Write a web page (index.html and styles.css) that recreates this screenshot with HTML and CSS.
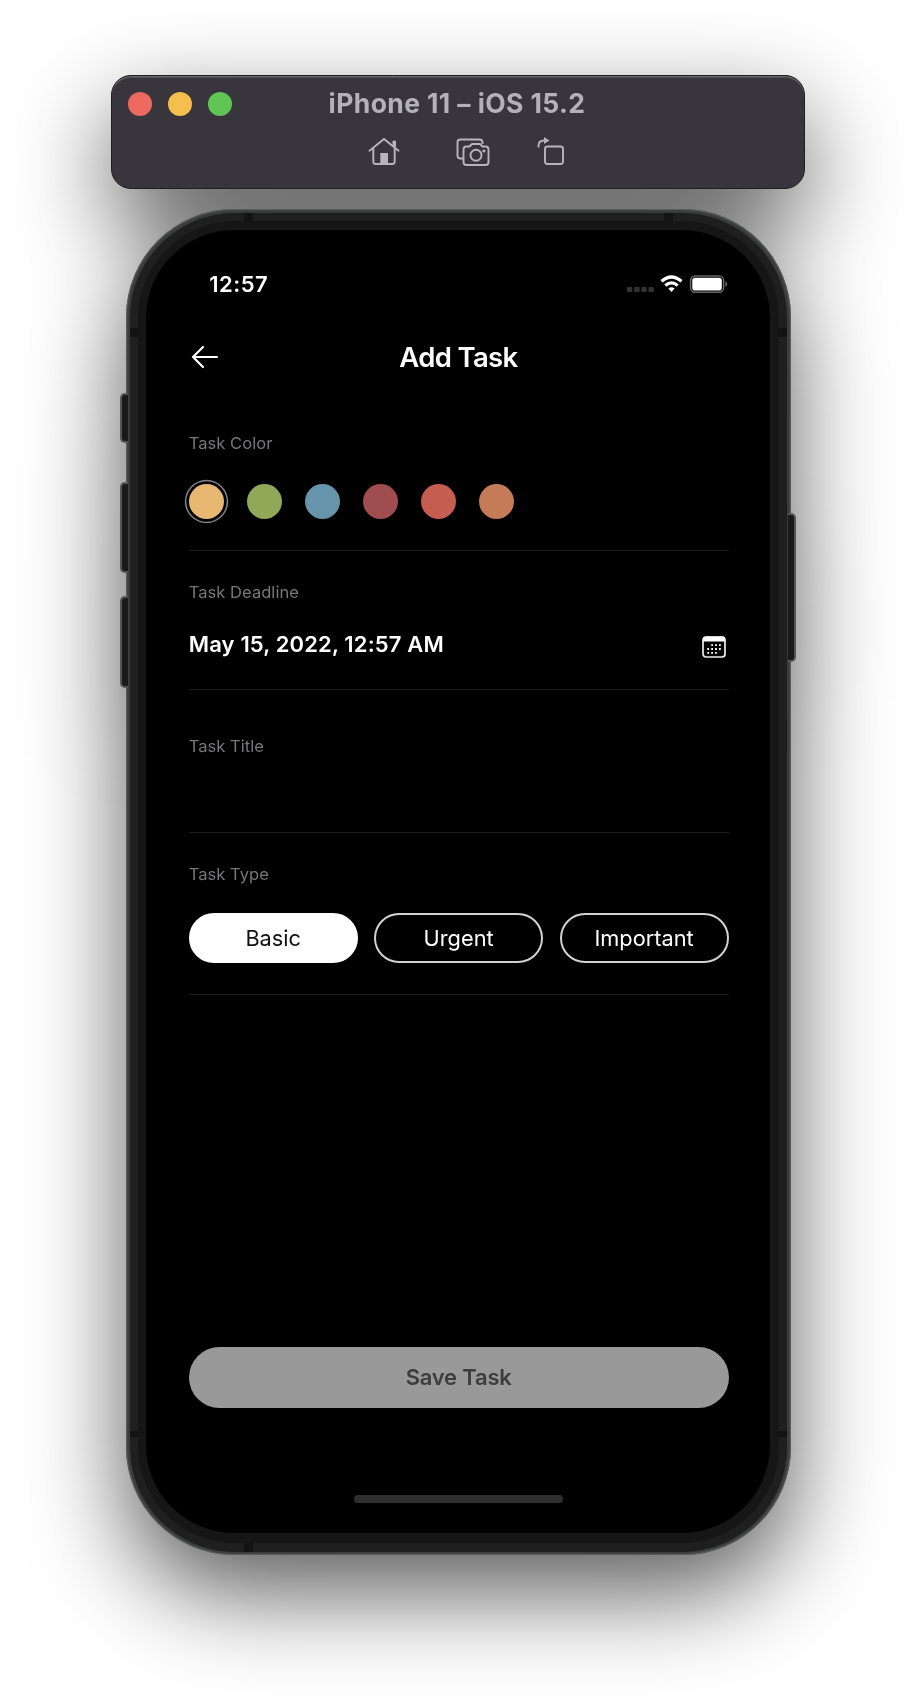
FILE: index.html
```html
<!DOCTYPE html>
<html lang="en">
<head>
<meta charset="utf-8">
<title>Add Task</title>
<link rel="stylesheet" href="styles.css">
</head>
<body>
<main class="simulator">
  <header class="window-bar">
    <div class="title-row">
      <div class="lights"><i class="light close"></i><i class="light minimize"></i><i class="light expand"></i></div>
      <h1 class="window-title">iPhone 11 – iOS 15.2</h1>
      <div class="title-spacer"></div>
    </div>
    <div class="tools">
      <svg class="tool" width="32" height="30" viewBox="0 0 32 30">
        <path d="M1.5 13.7 16 2 30.500 13.700M5.300 11.500V24.500Q5.300 27 7.800 27H24.200Q26.700 27 26.700 24.500V11.500M26.300 9.500V4.200" stroke-linecap="round"/>
        <path class="solid" d="M12.300 16h7.700v11h-7.700zM24.500 4h3.500v6l-3.500-2.500z"/>
      </svg>
      <svg class="tool" width="34" height="30" viewBox="0 0 34 30">
        <path d="M7 21.500H4.500Q1.500 21.500 1.500 18.500V5Q1.500 2.500 4.500 2.500H23.500Q26.500 2.500 26.500 5.500V7M10.500 9.500H13.500L16 7H24L26.500 9.500H29.500Q32.500 9.500 32.500 12.500V25Q32.500 28 29.500 28H10.500Q7.500 28 7.500 25V12.500Q7.500 9.500 10.500 9.500Z"/>
        <circle cx="20" cy="18.300" r="5.500"/><circle class="solid" cx="27.900" cy="14" r="1.600"/>
      </svg>
      <svg class="tool" width="28" height="30" viewBox="0 0 28 30">
        <rect x="8" y="9.500" width="18" height="17.500" rx="2.500"/>
        <path d="M1.500 10.500V9Q1.500 3.500 7 3.500H8"/><path class="solid" d="M7 0 12.500 3.500 7 7z"/>
      </svg>
    </div>
  </header>

  <section class="phone">
    <i class="key key-mute"></i><i class="key key-up"></i><i class="key key-down"></i><i class="key key-power"></i>
    <div class="band">
      <i class="seam seam-tl"></i><i class="seam seam-tr"></i><i class="seam seam-bl"></i>
      <i class="seam side-lt"></i><i class="seam side-rt"></i><i class="seam side-lb"></i><i class="seam side-rb"></i>
      <div class="bezel">
        <div class="screen">
          <div class="status">
            <span class="clock">12:57</span>
            <svg class="status-icons" width="101" height="20" viewBox="0 0 101 20">
              <g fill="#333"><rect x="0" y="12" width="5.400" height="5" rx="1"/><rect x="7.200" y="12" width="5.400" height="5" rx="1"/><rect x="14.400" y="12" width="5.400" height="5" rx="1"/><rect x="21.500" y="12" width="5.400" height="5" rx="1"/></g>
              <g fill="none" stroke="#fff" stroke-width="3.200"><path d="M34.500 6.300Q44.500-2.300 54.500 6.300"/><path d="M38.300 10.500Q44.500 5.300 50.700 10.500"/></g>
              <path fill="#fff" d="M41.400 13.600Q44.500 11 47.600 13.600L44.500 17z"/>
              <rect x="63.600" y=".900" width="33" height="16.400" rx="4.500" fill="none" stroke="#666" stroke-width="1.500"/>
              <rect x="65.300" y="2.700" width="29.500" height="12.800" rx="2.800" fill="#fff"/>
              <path fill="#666" d="M98.300 6.300Q100.200 7.500 100.200 9.200Q100.200 11 98.300 12.100z"/>
            </svg>
          </div>
          <nav class="nav">
            <svg class="back" width="28" height="24" viewBox="0 0 28 24"><path d="M26 12H2M12 2 2 12 12 22"/></svg>
            <h2 class="nav-title">Add Task</h2>
            <div class="nav-spacer"></div>
          </nav>
          <div class="group colors">
            <span class="label">Task Color</span>
            <div class="swatches">
              <i class="swatch sand selected"></i><i class="swatch green"></i><i class="swatch blue"></i><i class="swatch maroon"></i><i class="swatch red"></i><i class="swatch orange"></i>
            </div>
          </div>
          <div class="group deadline">
            <span class="label">Task Deadline</span>
            <div class="date-row">
              <span class="date">May 15, 2022, 12:57 AM</span>
              <svg class="calendar" width="24" height="22" viewBox="0 0 24 22">
                <rect x="1" y="1" width="22" height="20" rx="3" fill="none" stroke="#eee" stroke-width="1.700"/>
                <path fill="#fff" d="M1 5.500V3Q1 .500 3.500 .500H20.500Q23 .500 23 3V5.500z"/>
                <g fill="none" stroke="#fff" stroke-width="1.800" stroke-dasharray="1.800 2.100"><path d="M9.200 9.200h10"/><path d="M5.300 13h14"/><path d="M5.300 16.800h9.700"/></g>
              </svg>
            </div>
          </div>
          <div class="group title-field"><span class="label">Task Title</span></div>
          <div class="group type">
            <span class="label">Task Type</span>
            <div class="pills">
              <span class="pill active">Basic</span><span class="pill">Urgent</span><span class="pill">Important</span>
            </div>
          </div>
          <div class="save">Save Task</div>
          <div class="home-indicator"></div>
        </div>
      </div>
    </div>
  </section>
</main>
</body>
</html>
```
FILE: styles.css
```css
* { box-sizing: border-box; }
body { margin: 0; background: #fff; font-family: Inter, "Liberation Sans", sans-serif; }
h1, h2 { margin: 0; }
i { display: block; }

.simulator {
  height: 1704px;
  overflow: hidden;
  padding: 75px 111px 0;
  filter: drop-shadow(0 38px 48px rgba(0, 0, 0, .64));
}

/* window bar */
.window-bar {
  width: 694px;
  height: 114px;
  padding: 0 16px;
  border-radius: 20px;
  background: #38363c;
  border: 1px solid #1d2021;
  box-shadow: inset 0 1.500px 0 #66686a;
}
.title-row { display: flex; height: 56px; align-items: center; }
.lights { display: flex; gap: 16px; width: 180px; }
.light { width: 24px; height: 24px; border-radius: 50%; }
.close { background: #ed6a5e; }
.minimize { background: #f5bf4f; }
.expand { background: #61c554; }
.window-title { flex: 1; margin-top: -3px; text-align: center; font-size: 26.500px; line-height: 32px; font-weight: 700; letter-spacing: .400px; color: #b4b2b9; white-space: nowrap; }
.title-spacer { width: 182px; }
.tools { display: flex; align-items: center; padding: 5px 0 0 240px; }
.tool { fill: none; stroke: #b7b5bc; stroke-width: 1.900; stroke-linejoin: round; }
.tool + .tool { margin-left: 55.500px; }
.tool:last-child { margin-left: 47.500px; }
.tool .solid { fill: #b7b5bc; stroke: none; }

/* device frame */
.phone {
  position: relative;
  width: 664.500px;
  height: 1346px;
  margin: 20px 0 0 15px;
  padding: 3.500px;
  border-radius: 108px;
  background: #3a3b3b;
  box-shadow: inset 0 0 1.500px 1px #626464;
}
.band { position: relative; height: 100%; padding: 8.500px; border-radius: 105px; background: #1f1f1f; }
.bezel { height: 100%; padding: 9px 9px 10px 8px; border-radius: 97px; background: #161616; }
.key { position: absolute; left: -6px; width: 8px; border: 2px solid #555; border-right: 0; border-radius: 5px 0 0 5px; background: #191919; }
.key-mute { top: 184px; height: 50px; }
.key-up { top: 273px; height: 91px; }
.key-down { top: 387px; height: 92px; }
.key-power { left: auto; right: -5px; top: 304px; height: 149px; border: 2px solid #555; border-left: 0; border-radius: 0 5px 5px 0; }
.seam { position: absolute; width: 9px; height: 9px; background: #131313; }
.seam-tl { top: 0; left: 114.500px; }
.seam-tr { top: 0; right: 114.500px; }
.seam-bl { bottom: 0; left: 114.500px; }
.side-lt { left: 0; top: 115px; }
.side-rt { right: 0; top: 115px; }
.side-lb { left: 0; bottom: 115px; height: 6px; }
.side-rb { right: 0; bottom: 115px; height: 6px; }

/* app screen */
.screen {
  display: flex;
  flex-direction: column;
  height: 100%;
  padding: 0 41px 0 42.750px;
  border-radius: 88px;
  background: #000;
  color: #fff;
}
.status { display: flex; justify-content: space-between; height: 86px; padding: 41px 1px 0 20.500px; }
.clock { font-size: 22px; line-height: 27px; font-weight: 600; letter-spacing: .500px; }
.status-icons { margin-top: 4px; }
.nav { display: flex; align-items: center; height: 80px; }
.back { margin: 1px 0 0 2.500px; fill: none; stroke: #fff; stroke-width: 2.200; stroke-linecap: round; stroke-linejoin: round; }
.nav-title { flex: 1; margin-top: 1px; text-align: center; font-size: 27.500px; line-height: 32px; font-weight: 600; letter-spacing: -.650px; }
.nav-spacer { width: 31px; }
.group { border-bottom: 1.500px solid #1d1d1d; }
.label { display: block; font-size: 16.500px; line-height: 20px; letter-spacing: .050px; color: #77777a; }
.colors { height: 155px; padding-top: 37px; }
.swatches { display: flex; gap: 22.500px; margin-top: 30.500px; }
.swatch { width: 35.500px; height: 35.500px; border-radius: 50%; }
.selected { box-shadow: 0 0 0 2.700px #000, 0 0 0 4.200px #858388; }
.sand { background: #e8b873; }
.green { background: #90a959; }
.blue { background: #6694ab; }
.maroon { background: #a04d50; }
.red { background: #c55d50; }
.orange { background: #c67b58; }
.deadline { height: 139px; padding-top: 31px; }
.date-row { display: flex; justify-content: space-between; align-items: center; margin-top: 28px; padding-right: 3px; height: 28px; }
.date { font-size: 22px; line-height: 28px; font-weight: 600; letter-spacing: .150px; }
.calendar { margin-top: 5px; }
.title-field { height: 143px; padding-top: 46px; }
.type { height: 161.500px; padding-top: 31px; }
.pills { display: grid; grid-template-columns: repeat(3, 1fr); gap: 16.500px; margin-top: 28.500px; }
.pill { display: flex; align-items: center; justify-content: center; height: 50.500px; border: 2px solid #d2d2d2; border-radius: 26px; font-size: 21.750px; }
.active { background: #fff; color: #111; border-color: #fff; }
.save { display: flex; align-items: center; justify-content: center; height: 61.500px; margin-top: 352px; border-radius: 31px; background: #999; color: #3d3d3d; font-size: 22px; font-weight: 600; letter-spacing: -.200px; }
.home-indicator { align-self: center; width: 209px; height: 7.500px; margin-top: 87px; border-radius: 4px; background: #2f2f2f; }
```
